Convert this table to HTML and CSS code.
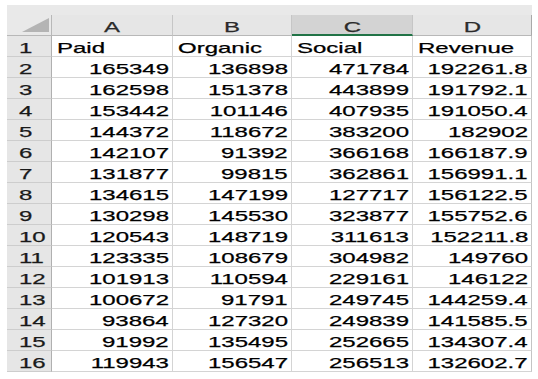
FILE: index.html
```html
<!DOCTYPE html>
<html lang="en">
<head>
  <meta charset="utf-8" />
  <title>Sheet1</title>
  <link rel="stylesheet" href="styles.css">
</head>
<body>
  <div class="sheet">
    <div class="topbar"></div>
    <div class="grid">
      <div class="corner"><span class="tri"></span></div>
      <div class="colhead"><span class="t">A</span></div>
      <div class="colhead"><span class="t">B</span></div>
      <div class="colhead selected"><span class="t">C</span></div>
      <div class="colhead last"><span class="t">D</span></div>

      <div class="rowhead"><span class="t">1</span></div>
      <div class="cell txt"><span class="t">Paid</span></div>
      <div class="cell txt"><span class="t">Organic</span></div>
      <div class="cell txt"><span class="t">Social</span></div>
      <div class="cell txt last"><span class="t">Revenue</span></div>

      <div class="rowhead"><span class="t">2</span></div>
      <div class="cell"><span class="t">165349</span></div>
      <div class="cell"><span class="t">136898</span></div>
      <div class="cell"><span class="t">471784</span></div>
      <div class="cell last"><span class="t">192261.8</span></div>

      <div class="rowhead"><span class="t">3</span></div>
      <div class="cell"><span class="t">162598</span></div>
      <div class="cell"><span class="t">151378</span></div>
      <div class="cell"><span class="t">443899</span></div>
      <div class="cell last"><span class="t">191792.1</span></div>

      <div class="rowhead"><span class="t">4</span></div>
      <div class="cell"><span class="t">153442</span></div>
      <div class="cell"><span class="t">101146</span></div>
      <div class="cell"><span class="t">407935</span></div>
      <div class="cell last"><span class="t">191050.4</span></div>

      <div class="rowhead"><span class="t">5</span></div>
      <div class="cell"><span class="t">144372</span></div>
      <div class="cell"><span class="t">118672</span></div>
      <div class="cell"><span class="t">383200</span></div>
      <div class="cell last"><span class="t">182902</span></div>

      <div class="rowhead"><span class="t">6</span></div>
      <div class="cell"><span class="t">142107</span></div>
      <div class="cell"><span class="t">91392</span></div>
      <div class="cell"><span class="t">366168</span></div>
      <div class="cell last"><span class="t">166187.9</span></div>

      <div class="rowhead"><span class="t">7</span></div>
      <div class="cell"><span class="t">131877</span></div>
      <div class="cell"><span class="t">99815</span></div>
      <div class="cell"><span class="t">362861</span></div>
      <div class="cell last"><span class="t">156991.1</span></div>

      <div class="rowhead"><span class="t">8</span></div>
      <div class="cell"><span class="t">134615</span></div>
      <div class="cell"><span class="t">147199</span></div>
      <div class="cell"><span class="t">127717</span></div>
      <div class="cell last"><span class="t">156122.5</span></div>

      <div class="rowhead"><span class="t">9</span></div>
      <div class="cell"><span class="t">130298</span></div>
      <div class="cell"><span class="t">145530</span></div>
      <div class="cell"><span class="t">323877</span></div>
      <div class="cell last"><span class="t">155752.6</span></div>

      <div class="rowhead"><span class="t">10</span></div>
      <div class="cell"><span class="t">120543</span></div>
      <div class="cell"><span class="t">148719</span></div>
      <div class="cell"><span class="t">311613</span></div>
      <div class="cell last"><span class="t">152211.8</span></div>

      <div class="rowhead"><span class="t">11</span></div>
      <div class="cell"><span class="t">123335</span></div>
      <div class="cell"><span class="t">108679</span></div>
      <div class="cell"><span class="t">304982</span></div>
      <div class="cell last"><span class="t">149760</span></div>

      <div class="rowhead"><span class="t">12</span></div>
      <div class="cell"><span class="t">101913</span></div>
      <div class="cell"><span class="t">110594</span></div>
      <div class="cell"><span class="t">229161</span></div>
      <div class="cell last"><span class="t">146122</span></div>

      <div class="rowhead"><span class="t">13</span></div>
      <div class="cell"><span class="t">100672</span></div>
      <div class="cell"><span class="t">91791</span></div>
      <div class="cell"><span class="t">249745</span></div>
      <div class="cell last"><span class="t">144259.4</span></div>

      <div class="rowhead"><span class="t">14</span></div>
      <div class="cell"><span class="t">93864</span></div>
      <div class="cell"><span class="t">127320</span></div>
      <div class="cell"><span class="t">249839</span></div>
      <div class="cell last"><span class="t">141585.5</span></div>

      <div class="rowhead"><span class="t">15</span></div>
      <div class="cell"><span class="t">91992</span></div>
      <div class="cell"><span class="t">135495</span></div>
      <div class="cell"><span class="t">252665</span></div>
      <div class="cell last"><span class="t">134307.4</span></div>

      <div class="rowhead"><span class="t">16</span></div>
      <div class="cell"><span class="t">119943</span></div>
      <div class="cell"><span class="t">156547</span></div>
      <div class="cell"><span class="t">256513</span></div>
      <div class="cell last"><span class="t">132602.7</span></div>
    </div>
  </div>
</body>
</html>
```

FILE: styles.css
```css
body {
  margin: 0;
  background-color: #fff;
  font-family: "Liberation Sans", Arial, sans-serif;
  font-size: 15px;
  color: #000;
}
.sheet {
  margin: 5px 0 0 7px;
  width: 525px;
}
.topbar {
  height: 10px;
  background-color: #e9e9e9;
}
.grid {
  display: grid;
  grid-template-columns: 45px 121px 119px 121px 119px;
  grid-template-rows: 21px;
  grid-auto-rows: 21px;
}
.grid > div {
  box-sizing: border-box;
  overflow: visible;
  white-space: nowrap;
}
.t {
  display: inline-block;
  transform: scaleX(1.6);
  transform-origin: right;
  -webkit-text-stroke: 0.25px currentColor;
}
.corner {
  display: flex;
  justify-content: flex-end;
  align-items: flex-end;
  padding: 0 2px 3px 0;
  background-color: #e9e9e9;
  border-right: 1px solid #b8b8b8;
  border-bottom: 1px solid #b8b8b8;
}
.tri {
  width: 0;
  height: 0;
  border-left: 27px solid transparent;
  border-bottom: 14px solid #b4b4b4;
}
.colhead {
  text-align: center;
  font-size: 15px;
  line-height: 16px;
  padding-top: 4px;
  color: #2b2b2b;
  background-color: #e6e6e6;
  border-right: 1px solid #c6c6c6;
  border-bottom: 1px solid #b8b8b8;
}
.colhead .t {
  transform-origin: center;
}
.colhead.selected {
  background-color: #d3d3d3;
  border-bottom: 2px solid #217346;
}
.colhead.last {
  border-right-color: #a9a9a9;
}
.rowhead {
  padding: 3px 0 0 12px;
  line-height: 17px;
  color: #1a1a1a;
  background-color: #e6e6e6;
  border-right: 1px solid #b0b0b0;
  border-bottom: 1px solid #cdcdcd;
}
.rowhead .t {
  transform-origin: left;
}
.cell {
  text-align: right;
  padding: 3px 3px 0 0;
  line-height: 17px;
  border-right: 1px solid #d4d4d4;
  border-bottom: 1px solid #d4d4d4;
}
.cell.txt {
  text-align: left;
  padding-left: 5px;
}
.cell.txt .t {
  transform-origin: left;
}
.cell.last {
  border-right-color: #c4c4c4;
}
```
